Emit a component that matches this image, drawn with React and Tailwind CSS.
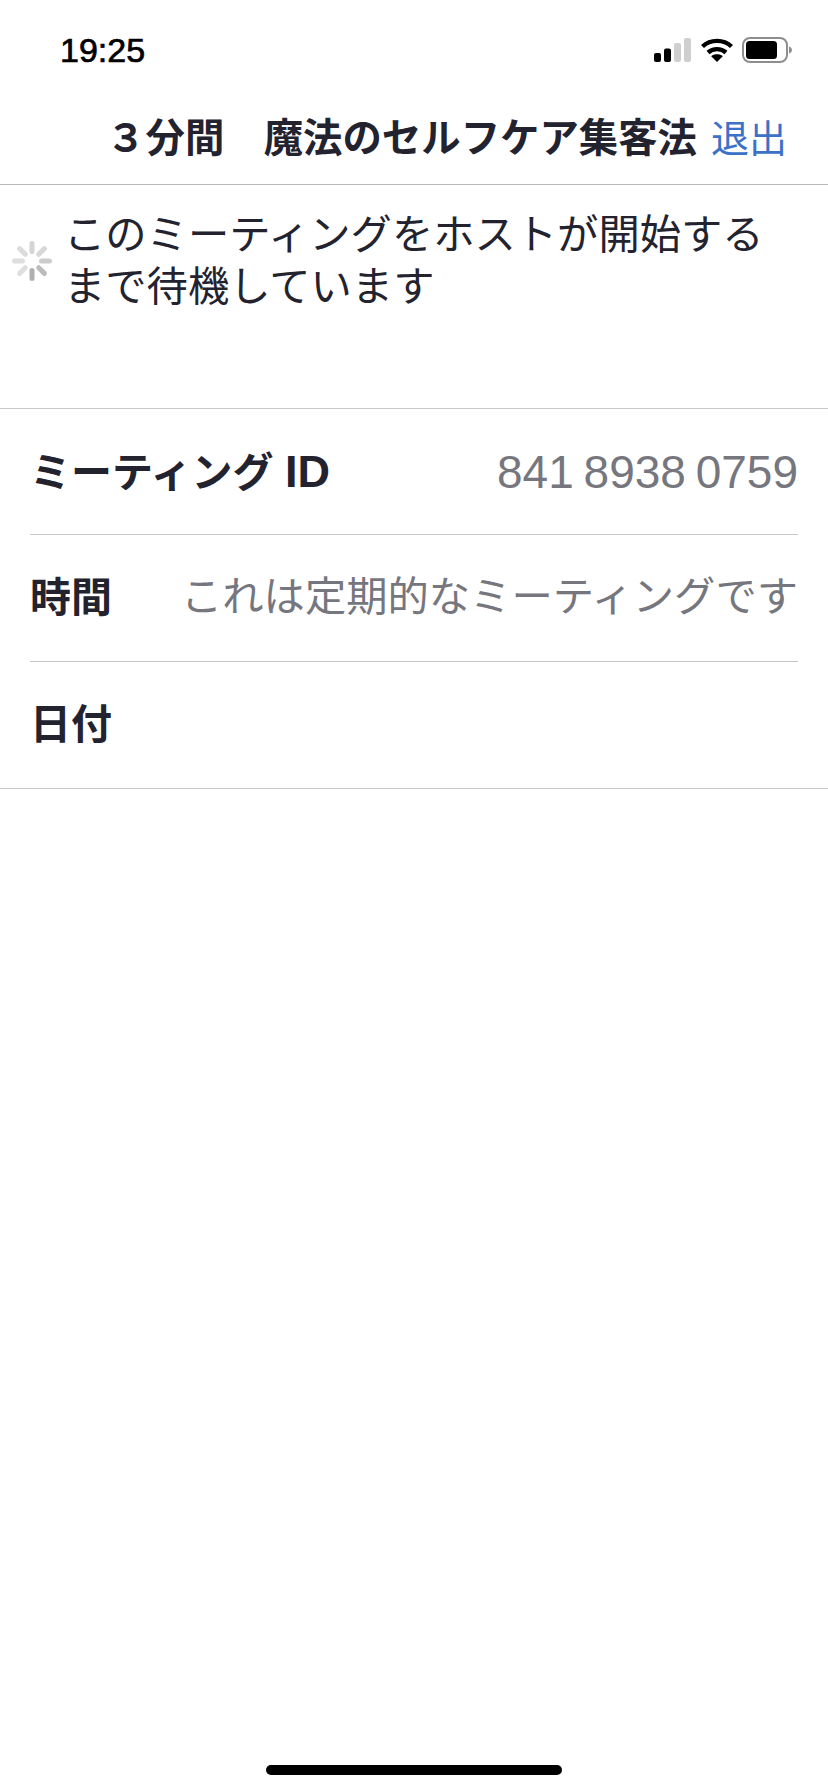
const cjk = "font-['Liberation_Sans','Noto_Sans_CJK_JP',sans-serif]";

function Signal() {
  return (
    <svg width="38" height="25" viewBox="0 0 38 25">
      <rect x="0" y="15" width="7" height="9" rx="2" fill="#000" />
      <rect x="10" y="10.5" width="7" height="13.5" rx="2" fill="#000" />
      <rect x="20" y="5" width="7" height="19" rx="2" fill="#cfcfcf" />
      <rect x="30" y="0" width="7" height="24" rx="2" fill="#cfcfcf" />
    </svg>
  );
}

function Wifi() {
  return (
    <svg width="32" height="24" viewBox="0 0 32 24" fill="none" stroke="#000" strokeWidth="4.4">
      <path d="M1.5 8.5C9.5 1 22.5 1 30.5 8.5" />
      <path d="M7 14.5C12 10 20 10 25 14.5" />
      <path d="M16 24l-5.8-5.8c3-2.6 8.6-2.6 11.6 0z" fill="#000" stroke="none" />
    </svg>
  );
}

function Battery() {
  return (
    <svg width="50" height="26" viewBox="0 0 50 26">
      <rect x="1" y="1" width="44" height="24" rx="7" fill="none" stroke="#8e8e8e" strokeWidth="2" />
      <rect x="4" y="4" width="31" height="18" rx="3.5" fill="#000" />
      <path d="M47 9.5c2 .6 3 2 3 3.5s-1 2.9-3 3.5z" fill="#8e8e8e" />
    </svg>
  );
}

function Spinner() {
  const shades = ["#d4d4d4", "#d8d8d8", "#cccccc", "#bcbcbc", "#b0b0b0", "#dedede", "#dedede", "#dcdcdc"];
  const angles = [0, 45, 90, 135, 180, 225, 270, 315];
  return (
    <svg width="40" height="40" viewBox="0 0 40 40">
      {angles.map((a, i) => (
        <rect key={a} x="17.5" y="0" width="5" height="13" rx="2.5" fill={shades[i]} transform={`rotate(${a} 20 20)`} />
      ))}
    </svg>
  );
}

function Row({ label, value, border, height }) {
  return (
    <div className={`${height} flex items-center justify-between ${border ? "border-b border-[#c8c8c8]" : ""}`}>
      <span className="text-[41px] leading-none font-bold text-[#23232f] whitespace-nowrap">{label}</span>
      {value}
    </div>
  );
}

export default function App() {
  return (
    <div className={`w-[828px] h-[1792px] bg-white relative overflow-hidden flex flex-col ${cjk}`}>
      <div className="h-[92px] shrink-0 flex items-start justify-between pl-[60px] pr-[36px] pt-[31px]">
        <span className="text-[34px] leading-[38px] font-['Liberation_Sans'] text-black [-webkit-text-stroke:0.7px_#000]">19:25</span>
        <div className="flex items-center pt-[6px]">
          <Signal />
          <div className="ml-[9px]"><Wifi /></div>
          <div className="ml-[9px]"><Battery /></div>
        </div>
      </div>
      <div className="h-[93px] shrink-0 border-b border-[#b9b9b9] flex items-center justify-end pr-[41px] pt-[2px]">
        <span className="text-[39.4px] leading-none font-bold text-[#23232f] whitespace-nowrap">３分間　魔法のセルフケア集客法</span>
        <span className="ml-[14px] text-[38px] leading-none text-[#3b71c8] whitespace-nowrap">退出</span>
      </div>
      <div className="h-[224px] shrink-0 border-b border-[#c8c8c8] flex items-start pl-[12px] pt-[24px]">
        <div className="mt-[32px]"><Spinner /></div>
        <p className="ml-[12px] w-[720px] text-[41.3px] leading-[52px] text-[#23232f]">このミーティングをホストが開始するまで待機しています</p>
      </div>
      <div className="px-[30px] shrink-0 flex flex-col">
        <Row height="h-[126px]" label={<>ミーティング <span className="text-[45px]">ID</span></>} border value={<span className="text-[46px] leading-none text-[#76767e] whitespace-nowrap [word-spacing:-3px]">841 8938 0759</span>} />
        <Row height="h-[127px]" label="時間" border value={<span className="text-[41.3px] leading-none text-[#76767e] whitespace-nowrap">これは定期的なミーティングです</span>} />
        <Row height="h-[126px]" label="日付" value={null} />
      </div>
      <div className="border-b border-[#c8c8c8]" />
      <div className="absolute bottom-[17px] left-[266px] w-[296px] h-[10px] rounded-full bg-black" />
    </div>
  );
}
